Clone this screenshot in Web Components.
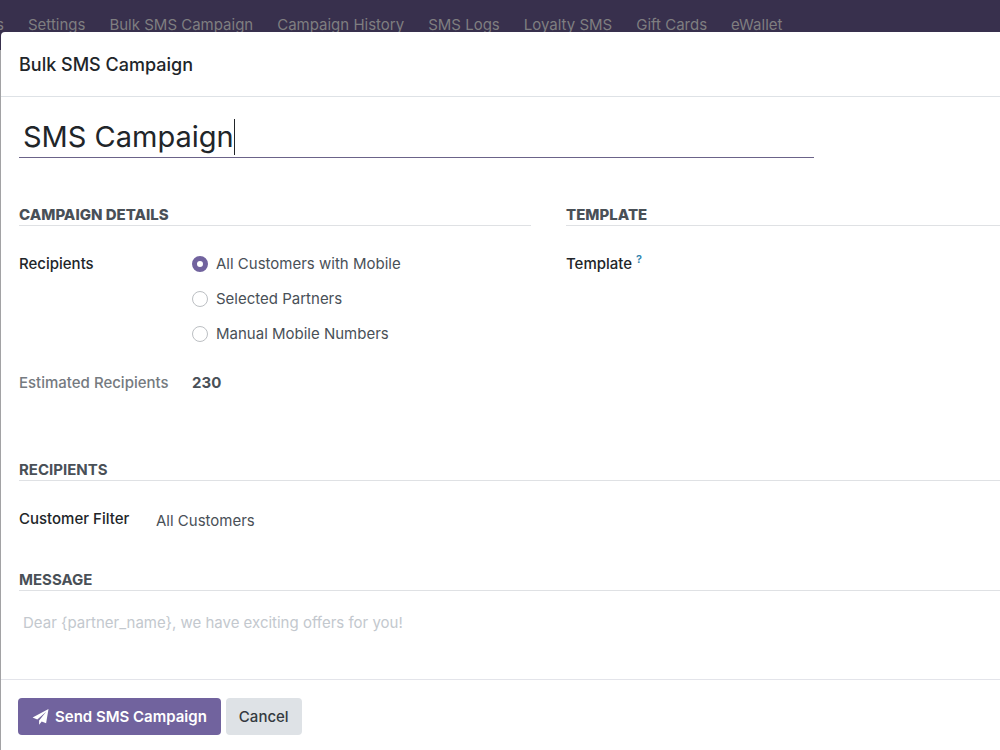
<!DOCTYPE html>
<html lang="en">
<head>
<meta charset="utf-8">
<title>Bulk SMS Campaign</title>
<style>
html, body { margin: 0; min-height: 100%; }
body {
  background: #a2a2a4;
  font-family: Inter, "Noto Sans", sans-serif;
  font-size: 15px;
  line-height: 24px;
  color: #495057;
}
</style>
</head>
<body>
<sms-app></sms-app>
<script>
const define = (name, html) => {
  const template = document.createElement('template');
  template.innerHTML = html;
  customElements.define(name, class extends HTMLElement {
    connectedCallback() {
      if (this.shadowRoot) return;
      this.attachShadow({ mode: 'open' }).append(template.content.cloneNode(true));
    }
  });
};

define('nav-bar', `
<style>
  :host { display: block; background: #38304d; height: 50px; overflow: hidden; }
  nav { display: flex; align-items: center; justify-content: flex-start; gap: 24px; height: 100%; }
  a { color: #7f7e80; text-decoration: none; white-space: nowrap; flex: none; }
  .cut { width: 4px; display: flex; justify-content: flex-end; }
</style>
<nav aria-label="Main">
  <a class="cut" href="#s">s</a>
  <a href="#settings">Settings</a>
  <a href="#bulk">Bulk SMS Campaign</a>
  <a href="#history">Campaign History</a>
  <a href="#logs">SMS Logs</a>
  <a href="#loyalty">Loyalty SMS</a>
  <a href="#gift">Gift Cards</a>
  <a href="#ewallet">eWallet</a>
</nav>`);

define('modal-dialog', `
<style>
  :host { display: flex; flex-direction: column; position: relative; background: #fff;
    margin: -18px 0 0 1px; min-height: calc(100vh - 32px); border-radius: 4px 0 0 0; }
  header { padding: 21px 18px 19px; border-bottom: 1px solid #dee2e6; }
  h1 { margin: 0; font-size: 18px; line-height: 24px; font-weight: 500; color: #212529; }
  main { padding: 19px 0 0 18px; flex: 1; }
  footer { display: flex; gap: 5px; padding: 18px 18px 15px 17px; border-top: 1px solid #e3e4ea; }
</style>
<header><h1><slot name="title"></slot></h1></header>
<main><slot></slot></main>
<footer><slot name="footer"></slot></footer>`);

define('title-field', `
<style>
  :host { display: flex; align-items: center; width: 81%; height: 42px; box-sizing: border-box;
    padding-left: 4px; border-bottom: 1px solid #6b6389; }
  input { font: inherit; font-size: 29px; line-height: 36px; height: 36px; color: #212529; border: 0;
    padding: 0; margin: 0; outline: 0; background: none; field-sizing: content; caret-color: transparent; }
  .caret { width: 1px; height: 36px; background: #212529; }
</style>
<input type="text" aria-label="Campaign name" value="SMS Campaign"><span class="caret"></span>`);

define('form-section', `
<style>
  :host { display: block; }
  h2 { margin: 0 0 var(--heading-gap, 26px); font-size: 15px; line-height: 20px;
    font-weight: var(--heading-weight, 700); color: #495057;
    text-transform: uppercase; border-bottom: 1px solid #dfe1e4; }
</style>
<section><h2><slot name="heading"></slot></h2><slot></slot></section>`);

define('form-columns', `
<style>
  :host { display: grid; grid-template-columns: 512fr 434fr; gap: 35px; --heading-weight: 800; }
</style>
<slot></slot>`);

define('field-row', `
<style>
  :host { display: flex; }
  .label { flex: none; width: var(--label-width, 173px); font-weight: 500; color: #212529; white-space: nowrap; }
  :host([muted]) .label { color: #757a80; }
  .value { min-width: 0; }
</style>
<div class="label"><slot name="label"></slot></div>
<div class="value"><slot></slot></div>`);

define('help-mark', `
<style>
  :host { display: inline; }
  sup { font-size: 11px; line-height: 1; font-weight: 600; color: #2f84ae; vertical-align: super; }
</style>
<sup title="Help">?</sup>`);

define('recipient-choice', `
<style>
  :host { display: block; }
  fieldset { display: grid; gap: 11px; border: 0; padding: 0; margin: 0; }
  label { display: flex; align-items: center; gap: 8px; white-space: nowrap; }
  input { appearance: none; box-sizing: border-box; width: 16px; height: 16px; margin: 0; flex: none;
    border: 1px solid #bcbfc3; border-radius: 50%; background: #fff; }
  input:checked { border: 5px solid #71639e; }
</style>
<fieldset aria-label="Recipients">
  <label><input type="radio" name="to" checked>All Customers with Mobile</label>
  <label><input type="radio" name="to">Selected Partners</label>
  <label><input type="radio" name="to">Manual Mobile Numbers</label>
</fieldset>`);

define('message-field', `
<style>
  :host { display: block; }
  textarea { display: block; width: 100%; height: 48px; box-sizing: border-box; padding: 0 4px; margin: 0;
    border: 0; outline: 0; resize: none; overflow: hidden; font: inherit; background: none; }
  textarea::placeholder { color: #c3c8ce; opacity: 1; }
</style>
<textarea aria-label="Message" placeholder="Dear {partner_name}, we have exciting offers for you!"></textarea>`);

define('action-button', `
<style>
  :host { display: block; }
  button { display: flex; align-items: center; gap: 6px; height: 37px; padding: 0 13px; border: 0;
    border-radius: 4px; font: inherit; font-weight: 500; white-space: nowrap; background: #dee2e6; color: #343a40; }
  :host([primary]) button { background: #71639e; color: #fff; font-weight: 600; padding: 0 14px; }
  ::slotted(svg) { display: block; flex: none; }
</style>
<button type="button"><slot></slot></button>`);

define('sms-app', `
<style>
  :host { display: block; }
  .top { margin-top: 47px; }
  .estimate { margin-top: 25px; }
  .estimate b { font-weight: 700; }
  .recipients { margin-top: 65px; }
  .filter { --label-width: 137px; }
  .filter .choice { display: block; padding-top: 2px; }
  .message { margin-top: 37px; --heading-gap: 20px; }
</style>
<nav-bar></nav-bar>
<modal-dialog role="dialog">
  <span slot="title">Bulk SMS Campaign</span>
  <title-field></title-field>
  <form-columns class="top">
    <form-section>
      <span slot="heading">Campaign Details</span>
      <field-row>
        <span slot="label">Recipients</span>
        <recipient-choice></recipient-choice>
      </field-row>
      <field-row class="estimate" muted>
        <span slot="label">Estimated Recipients</span><b>230</b>
      </field-row>
    </form-section>
    <form-section>
      <span slot="heading">Template</span>
      <field-row><span slot="label">Template <help-mark></help-mark></span></field-row>
    </form-section>
  </form-columns>
  <form-section class="recipients">
    <span slot="heading">Recipients</span>
    <field-row class="filter">
      <span slot="label">Customer Filter</span><span class="choice">All Customers</span>
    </field-row>
  </form-section>
  <form-section class="message">
    <span slot="heading">Message</span>
    <message-field></message-field>
  </form-section>
  <action-button slot="footer" primary><svg width="17" height="16" viewBox="0 0 17 16" aria-hidden="true"><path fill="#fff" d="M16.5 0 14.1 14.2 9.7 12.4 7.1 15.7V11.4L14.2 2.8 5.3 10.5 0.6 8.6Z"/></svg>Send SMS Campaign</action-button>
  <action-button slot="footer">Cancel</action-button>
</modal-dialog>`);
</script>
</body>
</html>
